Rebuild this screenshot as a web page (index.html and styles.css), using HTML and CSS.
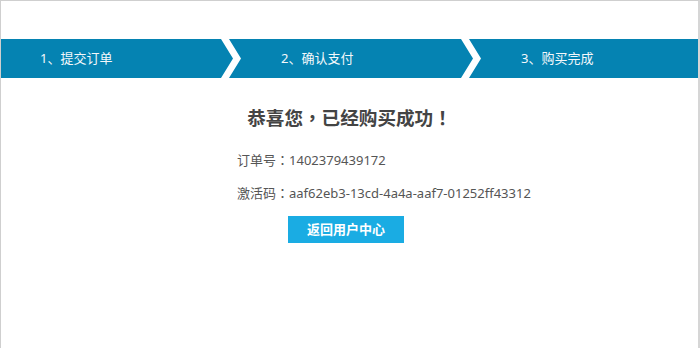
FILE: index.html
```html
<!DOCTYPE html>
<html lang="zh-CN">
<head>
<meta charset="utf-8">
<title>购买完成</title>
<link rel="stylesheet" href="styles.css">
</head>
<body>
<div class="frame">
  <div class="steps">
    <div class="step step-first">1、提交订单</div>
    <svg class="sep" width="20" height="39" viewBox="0 0 20 39"><polygon points="0,0 8,0 20,19.5 8,39 0,39 12,19.5" fill="#ffffff"/></svg>
    <div class="step">2、确认支付</div>
    <svg class="sep" width="20" height="39" viewBox="0 0 20 39"><polygon points="0,0 8,0 20,19.5 8,39 0,39 12,19.5" fill="#ffffff"/></svg>
    <div class="step step-last">3、购买完成</div>
  </div>
  <h1 class="title">恭喜您<span class="pc" lang="zh-Hant">，</span>已经购买成功<span class="pc" lang="zh-Hant">！</span></h1>
  <div class="info">
    <p class="line">订单号<span class="pc" lang="zh-Hant">：</span>1402379439172</p>
    <p class="line">激活码<span class="pc" lang="zh-Hant">：</span>aaf62eb3-13cd-4a4a-aaf7-01252ff43312</p>
    <a class="btn" href="#">返回用户中心</a>
  </div>
</div>
</body>
</html>
```

FILE: styles.css
```css
html, body {
  margin: 0;
  padding: 0;
  background: #ffffff;
}
body {
  font-family: "Noto Sans", "Noto Sans CJK SC", sans-serif;
  width: 700px;
  height: 348px;
  overflow: hidden;
  text-spacing-trim: space-all;
}
.frame {
  box-sizing: border-box;
  width: 700px;
  height: 348px;
  border-top: 1px solid #cfcfcf;
  border-left: 1px solid #cfcfcf;
  border-right: 2px solid #d6d6d6;
  padding-top: 38px;
}
.steps {
  display: flex;
  height: 39px;
  background: #0583b2;
}
.step {
  width: 220px;
  box-sizing: border-box;
  padding-left: 40px;
  line-height: 39px;
  font-size: 13px;
  color: #f4f8fb;
  white-space: nowrap;
}
.step-first {
  width: 220px;
  padding-left: 39px;
}
.step-last {
  flex: 1;
}
.sep {
  display: block;
  flex: none;
  background: #0583b2;
}
.title {
  margin: 27px 0 0;
  text-align: center;
  font-family: "Noto Sans CJK SC", sans-serif;
  font-size: 18.6px;
  line-height: 24px;
  font-weight: bold;
  color: #444444;
}
.pc {
  font-family: "Noto Sans CJK TC", sans-serif;
}
.info {
  padding-left: 236px;
  margin-top: 22px;
  display: flex;
  flex-direction: column;
  align-items: flex-start;
}
.line {
  margin: 0 0 15px;
  font-size: 13px;
  line-height: 18px;
  color: #555555;
  white-space: nowrap;
}
.btn {
  margin-left: 51px;
  margin-top: -1px;
  width: 116px;
  height: 27px;
  line-height: 27px;
  background: #1aace3;
  color: #ffffff;
  font-size: 13px;
  font-weight: bold;
  text-align: center;
  text-decoration: none;
}
```
